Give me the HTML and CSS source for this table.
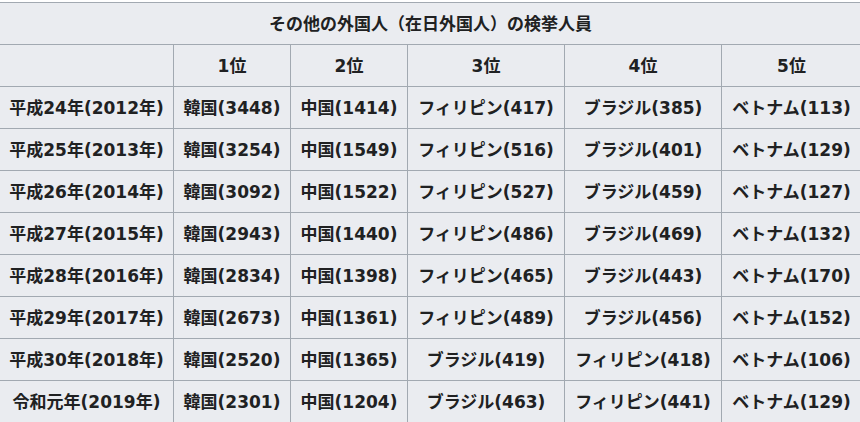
FILE: index.html
```html
<!DOCTYPE html>
<html lang="ja">
<head>
<meta charset="utf-8">
<link rel="stylesheet" href="styles.css">
</head>
<body>
<div class="wrap">
<table class="wikitable">
<colgroup>
<col class="c0"><col class="c1"><col class="c2"><col class="c3"><col class="c4"><col class="c5">
</colgroup>
<tr><th colspan="6">その他の外国人（在日外国人）の検挙人員</th></tr>
<tr><th></th><th>1位</th><th>2位</th><th>3位</th><th>4位</th><th>5位</th></tr>
<tr><th>平成24年(2012年)</th><th>韓国(3448)</th><th>中国(1414)</th><th>フィリピン(417)</th><th>ブラジル(385)</th><th>ベトナム(113)</th></tr>
<tr><th>平成25年(2013年)</th><th>韓国(3254)</th><th>中国(1549)</th><th>フィリピン(516)</th><th>ブラジル(401)</th><th>ベトナム(129)</th></tr>
<tr><th>平成26年(2014年)</th><th>韓国(3092)</th><th>中国(1522)</th><th>フィリピン(527)</th><th>ブラジル(459)</th><th>ベトナム(127)</th></tr>
<tr><th>平成27年(2015年)</th><th>韓国(2943)</th><th>中国(1440)</th><th>フィリピン(486)</th><th>ブラジル(469)</th><th>ベトナム(132)</th></tr>
<tr><th>平成28年(2016年)</th><th>韓国(2834)</th><th>中国(1398)</th><th>フィリピン(465)</th><th>ブラジル(443)</th><th>ベトナム(170)</th></tr>
<tr><th>平成29年(2017年)</th><th>韓国(2673)</th><th>中国(1361)</th><th>フィリピン(489)</th><th>ブラジル(456)</th><th>ベトナム(152)</th></tr>
<tr><th>平成30年(2018年)</th><th>韓国(2520)</th><th>中国(1365)</th><th>ブラジル(419)</th><th>フィリピン(418)</th><th>ベトナム(106)</th></tr>
<tr><th>令和元年(2019年)</th><th>韓国(2301)</th><th>中国(1204)</th><th>ブラジル(463)</th><th>フィリピン(441)</th><th>ベトナム(129)</th></tr>
</table>
</div>
</body>
</html>
```
FILE: styles.css
```css
html, body {
  margin: 0;
  padding: 0;
  background: #ffffff;
}
.wrap {
  width: 860px;
  height: 422px;
  overflow: hidden;
  padding-top: 2px;
  box-sizing: border-box;
}
.wikitable {
  margin-left: -1px;
  width: 862px;
  table-layout: fixed;
  border-collapse: collapse;
  background: #eaecf0;
  color: #202122;
  font-family: "DejaVu Sans", "Noto Sans CJK JP", sans-serif;
  font-size: 17px;
}
.c0 { width: 174px; }
.c1 { width: 117px; }
.c2 { width: 117px; }
.c3 { width: 157px; }
.c4 { width: 157px; }
.c5 { width: 140px; }
.wikitable th {
  border: 1px solid #a2a9b1;
  height: 42px;
  padding: 0 2px;
  box-sizing: border-box;
  text-align: center;
  vertical-align: middle;
  font-weight: bold;
  white-space: nowrap;
  line-height: 24px;
}
```
